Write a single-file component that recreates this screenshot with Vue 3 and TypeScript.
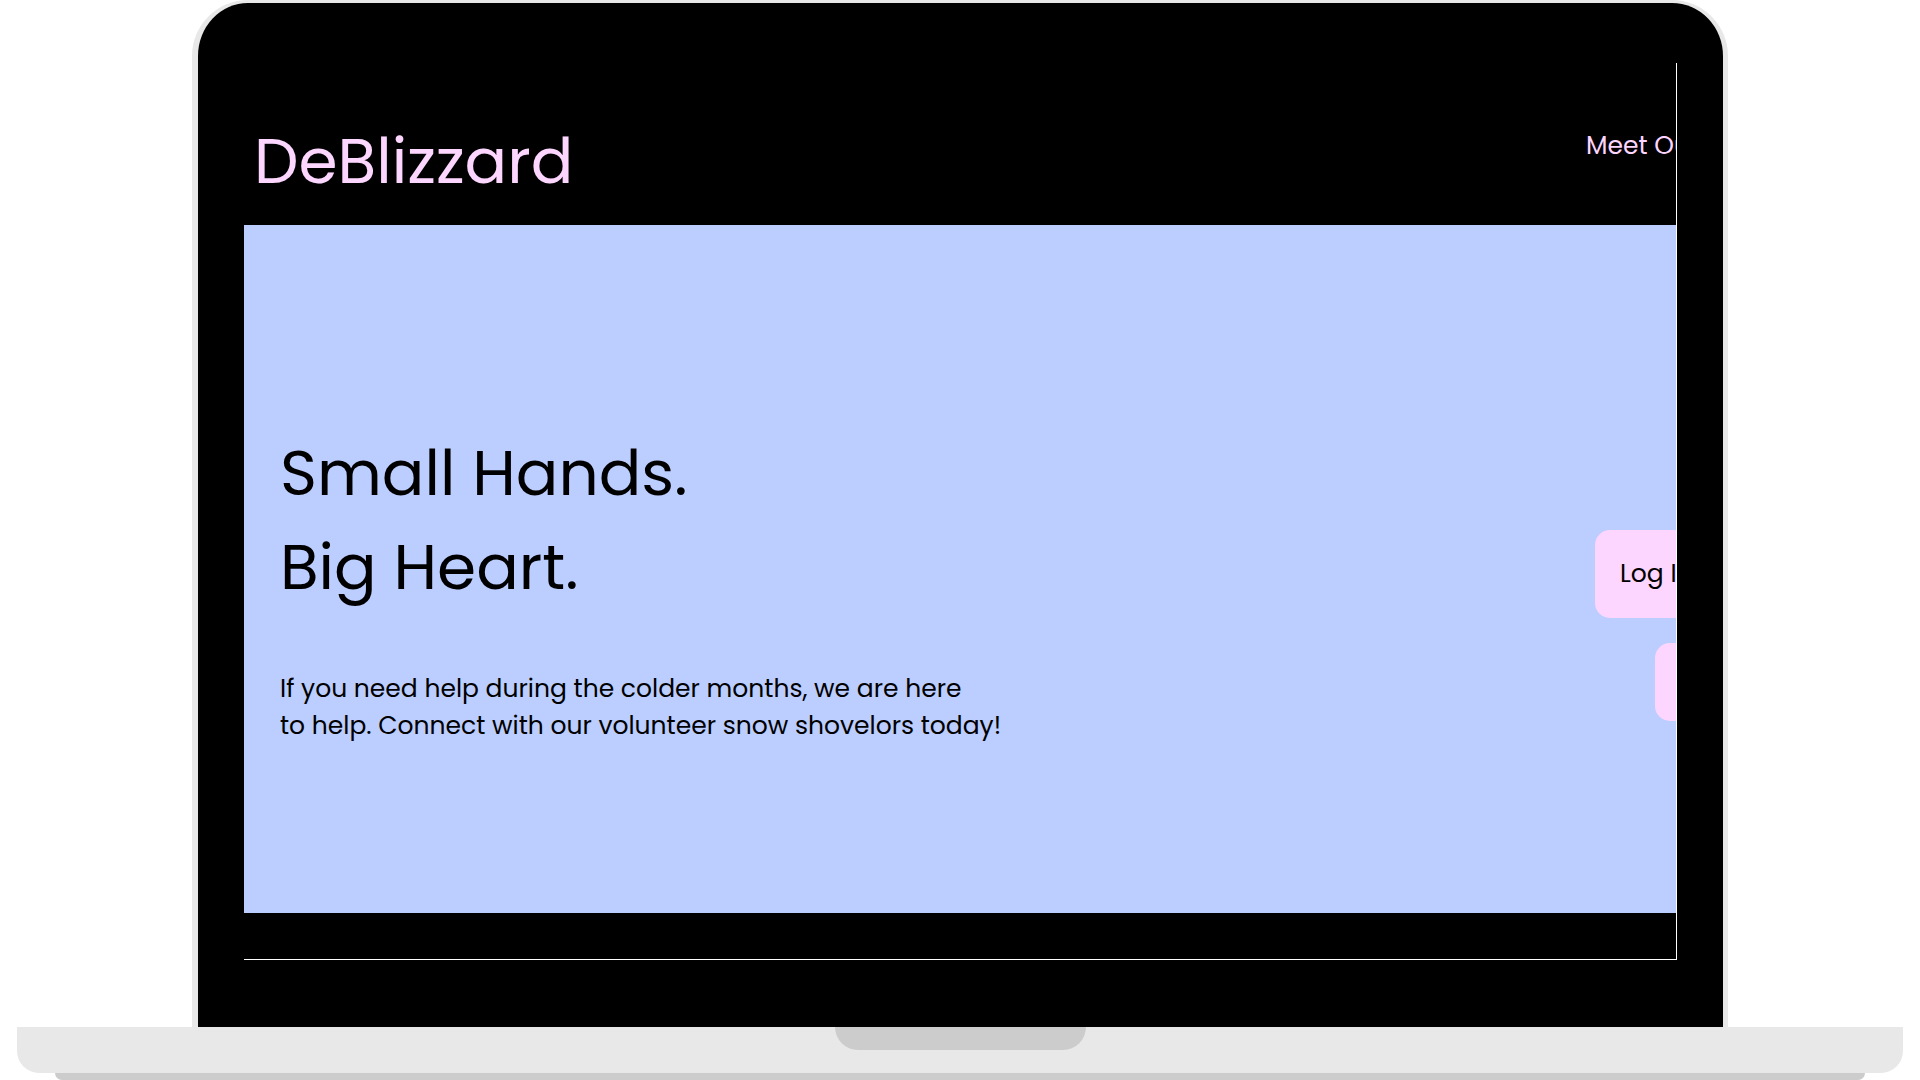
<script setup lang="ts">
const brand: string = 'DeBlizzard'
const headline: string[] = ['Small Hands.', 'Big Heart.']
const intro: string[] = [
  'If you need help during the colder months, we are here',
  'to help. Connect with our volunteer snow shovelors today!',
]
</script>

<template>
  <div class="page">
    <div class="lid">
      <div class="screen">
        <header class="header">
          <h1 class="brand">{{ brand }}</h1>
          <nav class="nav">
            <a class="nav-link" href="#team">Meet Ou</a>
          </nav>
        </header>
        <main class="hero">
          <section class="copy">
            <h2 class="headline">
              <span v-for="line in headline" :key="line" class="line">{{ line }}</span>
            </h2>
            <p class="intro">
              <span v-for="line in intro" :key="line" class="line">{{ line }}</span>
            </p>
          </section>
          <div class="actions">
            <button type="button" class="action login">Log I</button>
            <button type="button" class="action signup"></button>
          </div>
        </main>
        <footer class="footer"></footer>
      </div>
    </div>
    <div class="base">
      <div class="notch"></div>
    </div>
    <div class="foot"></div>
  </div>
</template>

<style>
body {
  margin: 0;
  background: #fff;
}
</style>

<style scoped>
.page {
  display: flex;
  flex-direction: column;
  box-sizing: border-box;
  min-height: 100vh;
  overflow: hidden;
  background: #fff;
  font-family: Poppins, Inter, "Open Sans", sans-serif;
}

.lid {
  display: flex;
  flex: 1;
  box-sizing: border-box;
  width: 80%;
  margin: 0 auto;
  padding: 60px 46px 67px;
  border: 5px solid #e8e8e8;
  border-top-width: 3px;
  border-left-width: 6px;
  border-bottom: 0;
  border-radius: 56px 56px 0 0;
  background: #000;
}

.screen {
  display: flex;
  flex: 1;
  flex-direction: column;
  min-width: 0;
  overflow: hidden;
  border-right: 1px solid #fff;
  border-bottom: 1px solid #fff;
  background: #000;
}

.header {
  display: flex;
  justify-content: space-between;
  height: 162px;
}

.brand {
  margin: 51px 0 0 10px;
  color: #fdd6ff;
  font-size: 63px;
  font-weight: 400;
  line-height: 94px;
}

.nav {
  flex: 0 0 90px;
  width: 90px;
  padding-top: 65px;
}

.nav-link {
  color: #fdd6ff;
  font-size: 25px;
  line-height: 36px;
  text-decoration: none;
  white-space: nowrap;
}

.hero {
  display: flex;
  flex: 1;
  align-items: center;
  justify-content: space-between;
  background: #bbceff;
}

.copy {
  padding: 32px 0 0 36px;
}

.headline {
  margin: 0;
  font-size: 63px;
  font-weight: 400;
  line-height: 94px;
}

.intro {
  margin: 56px 0 0;
  font-size: 25px;
  line-height: 37px;
}

.line {
  display: block;
  white-space: nowrap;
}

.actions {
  display: flex;
  flex: 0 0 81px;
  flex-direction: column;
  gap: 25px;
  width: 81px;
  padding-top: 112px;
}

.action {
  box-sizing: border-box;
  width: 132px;
  padding: 0 25px;
  border: 0;
  border-radius: 15px;
  background: #fdd6ff;
  color: #000;
  font-family: inherit;
  font-size: 25px;
  text-align: left;
  white-space: nowrap;
}

.login {
  height: 88px;
}

.signup {
  height: 78px;
  margin-left: 60px;
}

.footer {
  height: 46px;
}

.base {
  display: flex;
  justify-content: center;
  height: 46px;
  margin: 0 17px;
  border-radius: 0 0 22px 22px;
  background: #e8e8e8;
}

.notch {
  width: 251px;
  height: 23px;
  border-radius: 0 0 23px 23px;
  background: #ccc;
}

.foot {
  height: 7px;
  margin: 0 55px;
  border-radius: 0 0 7px 7px;
  background: #ccc;
}
</style>
